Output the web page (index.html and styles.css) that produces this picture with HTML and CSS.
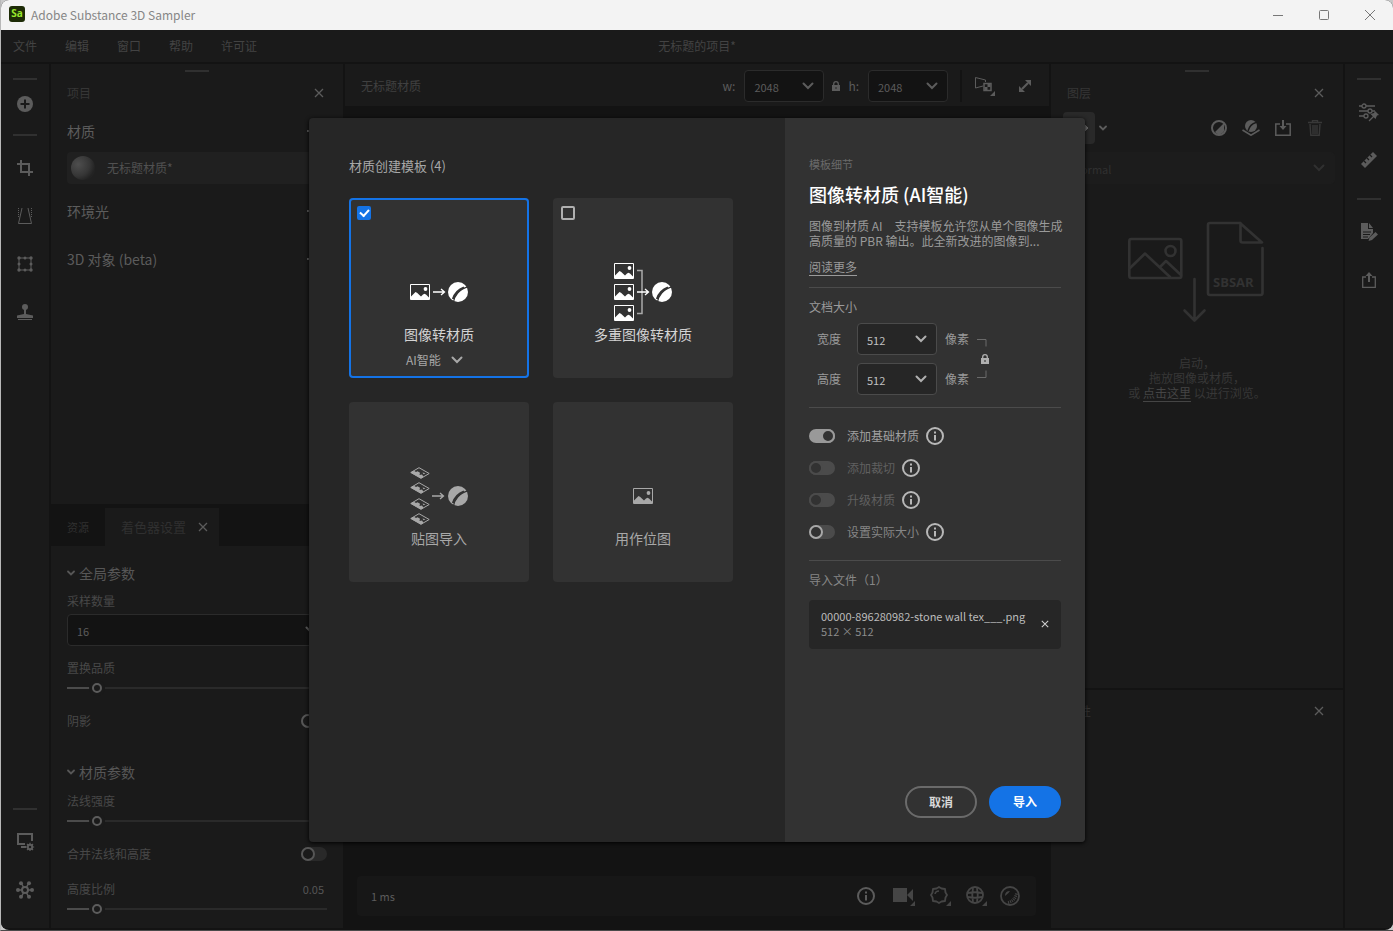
FILE: index.html
```html
<!DOCTYPE html>
<html lang="zh-CN">
<head>
<meta charset="utf-8">
<title>Adobe Substance 3D Sampler</title>
<link rel="stylesheet" href="styles.css">
</head>
<body>
<svg class="defs" aria-hidden="true">
  <symbol id="chevron" viewBox="0 0 12 8"><path d="M1.500 1.500 6 6l4.500-4.500" fill="none" stroke="currentColor" stroke-width="2" stroke-linecap="round"/></symbol>
  <symbol id="chevron-small" viewBox="0 0 8 6"><path d="M1 1.500l3 3 3-3" fill="none" stroke="currentColor" stroke-width="1.800" stroke-linecap="round"/></symbol>
  <symbol id="close" viewBox="0 0 10 10"><path d="M1 1l8 8M9 1 1 9" fill="none" stroke="currentColor" stroke-width="1.300"/></symbol>
  <symbol id="lock" viewBox="0 0 8 10"><path d="M0 4h8v6H0z" fill="currentColor"/><path d="M1.700 4.500V3a2.300 2.300 0 0 1 4.600 0v1.500" fill="none" stroke="currentColor" stroke-width="1.300"/><path class="cut" d="M3.500 6h1v2h-1z"/></symbol>
  <symbol id="info" viewBox="0 0 18 18"><circle cx="9" cy="9" r="8" fill="none" stroke="currentColor" stroke-width="2"/><path d="M8 8h2v5.500H8zM8 4.500h2v2H8z" fill="currentColor"/></symbol>
  <symbol id="image" viewBox="0 0 20 16"><path d="M.5.5h19v15H.5z" fill="none" stroke="currentColor"/><path d="M1 12.500 5.500 8l1.500.800L11 12.500l2-2 1.500-.800 1.500.800 3 3V16H1z" fill="currentColor"/><circle cx="15.500" cy="5" r="1.900" fill="currentColor"/></symbol>
  <symbol id="ball" viewBox="0 0 20 20"><circle cx="10" cy="10" r="10" fill="currentColor"/><path class="cut-line" d="M5.500 20C6.200 14 11 7 20 4.800" stroke-width="1.300"/><path class="cut-line" d="M5 17C6.500 12.500 10.500 7.500 16 5.500" stroke-width="2.300"/></symbol>
  <symbol id="arrow" viewBox="0 0 13 8"><path d="M0 4h11M8 1l3.500 3L8 7" fill="none" stroke="currentColor" stroke-width="1.300"/></symbol>
  <symbol id="tile" viewBox="0 0 20 12"><path d="M.8 5.500 9 .700 19.200 6.500 11 11.300z" fill="none" stroke="currentColor"/><path d="M.5 5.500 4 3.700l2 1.300 1.500-.700L10 5.800 9.500 8l2.500-.500 1.500 2.300-2.500 1.700z" fill="currentColor"/><path d="M12.500 5.500l3 .800-2 1z" fill="currentColor"/></symbol>
  <symbol id="dash" viewBox="0 0 12 12"><path d="M0 6h12" stroke="currentColor" stroke-width="2"/></symbol>
</svg>

<div class="window">
  <header class="titlebar">
    <span class="logo">Sa</span>
    <h1 class="app-name">Adobe Substance 3D Sampler</h1>
    <div class="window-buttons">
      <button aria-label="最小化"><svg width="10" height="10"><path d="M0 5.500h10" stroke="#777"/></svg></button>
      <button aria-label="最大化"><svg width="10" height="10"><rect x=".5" y=".5" width="9" height="9" rx="1" fill="none" stroke="#777"/></svg></button>
      <button aria-label="关闭窗口"><svg width="10" height="10"><path d="M0 0l10 10M10 0 0 10" stroke="#777"/></svg></button>
    </div>
  </header>

  <nav class="menubar">
    <div class="menus"><button>文件</button><button>编辑</button><button>窗口</button><button>帮助</button><button>许可证</button></div>
    <span>无标题的项目*</span>
    <span></span>
  </nav>

  <main class="workspace">
    <aside class="rail">
      <i class="grip"></i>
      <button class="short" aria-label="添加"><svg width="16" height="16" viewBox="0 0 16 16"><circle cx="8" cy="8" r="8" fill="currentColor"/><path d="M8 3.500v9M3.500 8h9" stroke="#1a1a1a" stroke-width="2"/></svg></button>
      <i class="grip"></i>
      <button aria-label="裁剪"><svg width="16" height="16" viewBox="0 0 16 16" fill="none" stroke="currentColor" stroke-width="2"><path d="M4 0v12h12M0 4h3M5 4h7v7M12 13v3"/></svg></button>
      <button aria-label="透视"><svg width="16" height="18" viewBox="0 0 16 18" fill="none" stroke="currentColor"><path d="M5 1 1.500 16.500h13L11 1"/><path d="M1.500 1v10M14.500 1v10" stroke-dasharray="1 1"/></svg></button>
      <button aria-label="变换"><svg width="16" height="16" viewBox="0 0 16 16"><path d="M2 2h12v12H2z" fill="none" stroke="currentColor"/><g fill="currentColor"><circle cx="2" cy="2" r="1.700"/><circle cx="8" cy="2" r="1.500"/><circle cx="14" cy="2" r="1.700"/><circle cx="2" cy="8" r="1.500"/><circle cx="14" cy="8" r="1.500"/><circle cx="2" cy="14" r="1.700"/><circle cx="8" cy="14" r="1.500"/><circle cx="14" cy="14" r="1.700"/></g></svg></button>
      <button aria-label="图章"><svg width="16" height="16" viewBox="0 0 16 16" fill="currentColor"><circle cx="8" cy="3" r="3"/><path d="M7 5h2v5l7 1.500V14H0v-2.500L7 10zM1 15h14v1H1z"/></svg></button>
      <div class="rail-end">
        <i class="grip"></i>
        <button aria-label="显示设置"><svg width="19" height="18" viewBox="0 0 19 18"><path d="M9 11H2V1h14v7" fill="none" stroke="currentColor" stroke-width="2"/><path d="M5 13h5v2H5z" fill="currentColor"/><circle cx="14" cy="14" r="2.200" fill="none" stroke="currentColor" stroke-width="2"/><path d="M14 9.800v8.400M9.800 14h8.400M11 11l6 6M17 11l-6 6" stroke="currentColor" stroke-width="1.200"/><circle cx="14" cy="14" r="1.200" fill="#1a1a1a"/></svg></button>
        <button aria-label="节点"><svg width="18" height="18" viewBox="0 0 18 18"><path d="M2 9h14M5.500 2.500l7 13M12.500 2.500l-7 13" stroke="currentColor" stroke-width="1.500"/><g fill="currentColor"><circle cx="2" cy="9" r="2"/><circle cx="16" cy="9" r="2"/><circle cx="5" cy="2.200" r="2"/><circle cx="13" cy="2.200" r="2"/><circle cx="5" cy="15.800" r="2"/><circle cx="13" cy="15.800" r="2"/></g><circle cx="9" cy="9" r="3" fill="#1a1a1a" stroke="currentColor" stroke-width="2"/></svg></button>
      </div>
    </aside>

    <div class="side left">
      <section class="panel project">
        <i class="grip"></i>
        <header class="panel-head"><h2>项目</h2><button aria-label="关闭项目"><svg width="10" height="10"><use href="#close"/></svg></button></header>
        <div class="group"><span>材质</span><button aria-label="折叠材质"><svg width="12" height="12"><use href="#dash"/></svg></button></div>
        <div class="material"><i class="sphere"></i><span>无标题材质*</span></div>
        <div class="group"><span>环境光</span><button aria-label="折叠环境光"><svg width="12" height="12"><use href="#dash"/></svg></button></div>
        <div class="group"><span>3D 对象 (beta)</span><button aria-label="折叠对象"><svg width="12" height="12"><use href="#dash"/></svg></button></div>
      </section>
      <section class="panel shader">
        <div class="tabs">
          <button class="tab small">资源</button>
          <button class="tab active">着色器设置 <svg width="10" height="10"><use href="#close"/></svg></button>
        </div>
        <div class="params">
          <h3><svg width="8" height="6"><use href="#chevron-small"/></svg>全局参数</h3>
          <label class="name" for="samples">采样数量</label>
          <div class="select wide"><select id="samples"><option>16</option></select><svg width="12" height="8"><use href="#chevron"/></svg></div>
          <label class="name" for="quality">置换品质</label>
          <input id="quality" type="range" value="10">
          <div class="switch-row"><label for="shadow">阴影</label><input id="shadow" class="toggle dim" type="checkbox"></div>
          <h3 class="second"><svg width="8" height="6"><use href="#chevron-small"/></svg>材质参数</h3>
          <label class="name" for="normal">法线强度</label>
          <input id="normal" type="range" value="10">
          <div class="switch-row"><label for="merge">合并法线和高度</label><input id="merge" class="toggle dim" type="checkbox"></div>
          <div class="name-row"><label for="ratio">高度比例</label><span class="num">0.05</span></div>
          <input id="ratio" type="range" value="10">
        </div>
      </section>
    </div>

    <section class="center">
      <header class="view-bar">
        <span class="view-name">无标题材质</span>
        <label for="view-w">w:</label>
        <div class="select"><select id="view-w"><option>2048</option></select><svg width="12" height="8"><use href="#chevron"/></svg></div>
        <svg class="view-lock" width="8" height="10"><use href="#lock"/></svg>
        <label for="view-h">h:</label>
        <div class="select"><select id="view-h"><option>2048</option></select><svg width="12" height="8"><use href="#chevron"/></svg></div>
        <i class="divider"></i>
        <button aria-label="视图模式"><svg width="20" height="20" viewBox="0 0 20 20"><path d="M8 10 .500 12V1.500L10.500 4v2" fill="none" stroke="currentColor"/><path d="M9 7.500h7v7H9z" fill="none" stroke="currentColor" stroke-width="1.500"/><path d="M12.500 8h3v3h-3zM9.500 11h3v3h-3zM20 15v5h-5z" fill="currentColor"/></svg></button>
        <button aria-label="展开"><svg width="12" height="12" viewBox="0 0 12 12"><path d="M3 9l6-6" stroke="currentColor" stroke-width="2.200"/><path d="M6 0h6v6zM0 6v6h6z" fill="currentColor"/></svg></button>
      </header>
      <footer class="status">
        <span>1 ms</span>
        <button class="bright" aria-label="信息"><svg width="18" height="18"><use href="#info"/></svg></button>
        <button class="has-menu" aria-label="相机"><svg width="22" height="20" viewBox="0 0 22 20" fill="currentColor"><path d="M0 2h14v14H0zM14 9l6-6v12zM22 15v5h-5z"/></svg></button>
        <button class="has-menu" aria-label="环境"><svg width="22" height="20" viewBox="0 0 22 20"><path d="M10 1l2.500 1.500 3.500.5.500 3.500L18 9l-1.500 2.500-.5 3.500-3.500.5L10 17l-2.500-1.500L4 15l-.500-3.500L2 9l1.500-2.500L4 3l3.500-.5z" fill="none" stroke="currentColor" stroke-width="1.800" stroke-linejoin="round"/><path d="M6 8q.5-3 4-3" fill="none" stroke="currentColor" stroke-width="1.500"/><path d="M22 15v5h-5z" fill="currentColor"/></svg></button>
        <button class="has-menu" aria-label="网格"><svg width="22" height="20" viewBox="0 0 22 20"><g fill="none" stroke="currentColor" stroke-width="1.800"><circle cx="10" cy="9" r="8"/><path d="M8 2q-1.500 7 0 14M12 2q1.500 7 0 14M3 7q7-1.500 14 0M3 11q7 1.500 14 0"/></g><path d="M22 15v5h-5z" fill="currentColor"/></svg></button>
        <button aria-label="着色"><svg width="20" height="20" viewBox="0 0 20 20"><circle cx="10" cy="10" r="9" fill="none" stroke="currentColor" stroke-width="1.800"/><path d="M5 10q0-5 5-5l-1.500 2z" fill="currentColor"/><path d="M16.500 7.500Q15 15 8 16.500" fill="none" stroke="currentColor" stroke-width="3" stroke-dasharray="1 1"/></svg></button>
      </footer>
    </section>

    <div class="side right">
      <section class="panel layers">
        <i class="grip"></i>
        <header class="panel-head"><h2>图层</h2><button aria-label="关闭图层"><svg width="10" height="10"><use href="#close"/></svg></button></header>
        <div class="tools">
          <button class="brush" aria-label="图层类型"><svg width="20" height="8" viewBox="0 0 20 8"><path d="M0 4h16M15 0l4 4-4 4z" fill="currentColor" stroke="currentColor"/></svg></button>
          <button class="more" aria-label="更多"><svg width="8" height="6"><use href="#chevron-small"/></svg></button>
          <button aria-label="滤镜"><svg width="16" height="16" viewBox="0 0 16 16"><circle cx="8" cy="8" r="7" fill="none" stroke="currentColor" stroke-width="2"/><path d="M13 3v5a5 5 0 0 1-9 4z" fill="currentColor"/></svg></button>
          <button aria-label="材质图层"><svg width="18" height="16" viewBox="0 0 18 16"><circle cx="9" cy="6" r="6" fill="currentColor"/><path d="M6 11Q8 4 14 2.500" fill="none" stroke="#1a1a1a" stroke-width="1.500"/><path d="M.5 10 9 15.200l8.500-5.200" fill="none" stroke="currentColor" stroke-width="1.600"/></svg></button>
          <button aria-label="导入图层"><svg width="16" height="16" viewBox="0 0 16 16"><path d="M5 4H.800v11.200h14.400V4H11" fill="none" stroke="currentColor" stroke-width="1.500"/><path d="M7 0h2v6h2.500L8 10 4.500 6H7z" fill="currentColor"/></svg></button>
          <button class="off" aria-label="删除"><svg width="14" height="16" viewBox="0 0 14 16"><path d="M0 2.500h14M4.500 2V.500h5V2M2 4l.800 11.300h8.400L12 4M5 5v9M7 5v9M9 5v9" fill="none" stroke="currentColor" stroke-width="1.400"/></svg></button>
        </div>
        <div class="select blend"><select aria-label="混合模式" disabled><option>Normal</option></select><svg width="12" height="8"><use href="#chevron"/></svg></div>
        <svg class="drop-art" width="136" height="102" viewBox="0 0 136 102" fill="none" stroke="#323232" stroke-width="2.600" stroke-linejoin="round" stroke-linecap="round"><rect x="1.300" y="18" width="52" height="39" rx="2"/><circle cx="42.500" cy="30" r="5"/><path d="M2 47 17 32.500 42 56M32 46l6-6 15 14"/><path d="M134.500 27v45a2 2 0 0 1-2 2H82a2 2 0 0 1-2-2V4a2 2 0 0 1 2-2h30l22 19.500h-19.500a2 2 0 0 1-2-2V2"/><path d="M66.500 58v41M56.500 89.500l10 10 10-10"/><text x="85" y="66" fill="#323232" stroke="none" class="art-label">SBSAR</text></svg>
        <p class="hint">启动，<br>拖放图像或材质，<br>或 <a href="#browse">点击这里</a> 以进行浏览。</p>
      </section>
      <section class="panel props">
        <header class="panel-head"><h2>属性</h2><button aria-label="关闭属性"><svg width="10" height="10"><use href="#close"/></svg></button></header>
      </section>
    </div>

    <aside class="rail">
      <i class="grip"></i>
      <button aria-label="参数"><svg width="20" height="19" viewBox="0 0 20 19"><g fill="none" stroke="currentColor" stroke-width="1.300"><path d="M0 3h3M7 3h9M0 8h9M13 8h3M0 13h5"/><circle cx="5" cy="3" r="2"/><circle cx="11" cy="8" r="2"/><circle cx="7" cy="13" r="2"/><path d="M10 18l5-5"/></g><path d="M16 8l4 4-2 .500-1.500 3.500-5-5L15 10z" fill="currentColor"/></svg></button>
      <button aria-label="测量"><svg width="16" height="16" viewBox="0 0 16 16"><path d="M0 12 12 0l4 4L4 16z" fill="currentColor"/><path d="M3 9l2 2M6 6l2 2M9 3l2 2" stroke="#1a1a1a" stroke-width="1.200"/></svg></button>
      <i class="grip"></i>
      <button aria-label="元数据"><svg width="17" height="18" viewBox="0 0 17 18"><path d="M0 0h7v6h5v4l-5 6H0zM8 0l4 5H8z" fill="currentColor"/><path d="M2 9h8M2 11.500h7M2 14h5" stroke="#1a1a1a"/><path d="M7.500 18l1-3.500 6-5.500 2.500 2.500-6 5.500z" fill="currentColor"/></svg></button>
      <button aria-label="分享"><svg width="14" height="16" viewBox="0 0 14 16"><path d="M4 5H.700v10.300h12.600V5H10" fill="none" stroke="currentColor" stroke-width="1.300"/><path d="M6 10V4H3.500L7 0l3.500 4H8v6z" fill="currentColor"/></svg></button>
    </aside>
  </main>

  <div class="overlay">
    <div class="dialog" role="dialog" aria-label="材质创建模板">
      <section class="templates">
        <h2>材质创建模板 (4)</h2>
        <div class="cards">
          <article class="card selected">
            <input type="checkbox" aria-label="图像转材质" checked>
            <svg class="art" width="60" height="60" viewBox="0 0 60 60"><use href="#image" x="1" y="22" width="20" height="16"/><use href="#arrow" x="24" y="26" width="13" height="8"/><use href="#ball" x="39" y="20" width="20" height="20"/></svg>
            <h3>图像转材质</h3>
            <button class="variant">AI智能 <svg width="12" height="8"><use href="#chevron"/></svg></button>
          </article>
          <article class="card">
            <input type="checkbox" aria-label="多重图像转材质">
            <svg class="art" width="60" height="60" viewBox="0 0 60 60"><use href="#image" x="1" y="1" width="20" height="16"/><use href="#image" x="1" y="22" width="20" height="16"/><use href="#image" x="1" y="43" width="20" height="16"/><path d="M24 8.500h5v43h-5" fill="none" stroke="#aaa" stroke-width="1.500"/><use href="#arrow" x="24" y="26" width="13" height="8"/><use href="#ball" x="39" y="20" width="20" height="20"/></svg>
            <h3>多重图像转材质</h3>
          </article>
          <article class="card muted">
            <svg class="art" width="60" height="60" viewBox="0 0 60 60"><use href="#tile" x="1" y="1" width="20" height="12"/><use href="#tile" x="1" y="16" width="20" height="12"/><use href="#tile" x="1" y="32" width="20" height="12"/><use href="#tile" x="1" y="47" width="20" height="12"/><use href="#arrow" x="23" y="26" width="13" height="8"/><use href="#ball" x="39" y="20" width="20" height="20"/></svg>
            <h3>贴图导入</h3>
          </article>
          <article class="card muted">
            <svg class="art" width="60" height="60" viewBox="0 0 60 60"><use href="#image" x="20" y="22" width="20" height="16"/></svg>
            <h3>用作位图</h3>
          </article>
        </div>
      </section>
      <section class="details">
        <p class="eyebrow">模板细节</p>
        <h2>图像转材质 (AI智能)</h2>
        <p class="desc">图像到材质 AI　支持模板允许您从单个图像生成<br>高质量的 PBR 输出。此全新改进的图像到...</p>
        <a class="read-more" href="#more">阅读更多</a>
        <div class="block">
          <h3>文档大小</h3>
          <div class="size">
            <label for="doc-w">宽度</label>
            <div class="select"><select id="doc-w"><option>512</option></select><svg width="12" height="8"><use href="#chevron"/></svg></div>
            <span>像素</span>
            <svg class="link" width="16" height="48" viewBox="0 0 16 48"><path d="M1 4.500h9v7M1 42.500h9v-7" fill="none" stroke="#6a6a6a"/><use href="#lock" x="5" y="19" width="8" height="10"/></svg>
            <label for="doc-h">高度</label>
            <div class="select"><select id="doc-h"><option>512</option></select><svg width="12" height="8"><use href="#chevron"/></svg></div>
            <span>像素</span>
          </div>
        </div>
        <div class="block options">
          <div class="option on"><input id="base" class="toggle" type="checkbox" checked><label for="base">添加基础材质</label><svg width="18" height="18"><use href="#info"/></svg></div>
          <div class="option off"><input id="crop" class="toggle" type="checkbox" disabled><label for="crop">添加裁切</label><svg width="18" height="18"><use href="#info"/></svg></div>
          <div class="option off"><input id="upscale" class="toggle" type="checkbox" disabled><label for="upscale">升级材质</label><svg width="18" height="18"><use href="#info"/></svg></div>
          <div class="option"><input id="physical" class="toggle" type="checkbox"><label for="physical">设置实际大小</label><svg width="18" height="18"><use href="#info"/></svg></div>
        </div>
        <div class="block files">
          <h3>导入文件（1）</h3>
          <div class="file">
            <div><p class="file-name">00000-896280982-stone wall tex___.png</p><p class="file-size">512 × 512</p></div>
            <button aria-label="移除文件"><svg width="8" height="8"><use href="#close"/></svg></button>
          </div>
        </div>
        <div class="actions"><button class="cancel">取消</button><button class="import">导入</button></div>
      </section>
    </div>
  </div>
</div>
</body>
</html>
```
FILE: styles.css
```css
*, *::before { box-sizing: border-box; }
html, body { height: 100%; }
body {
  margin: 0;
  border-left: 1px solid #b8b8b8;
  border-bottom: 1px solid #4a4a4a;
  background: #c8c8c8;
  color: #4e4e4e;
  font: 12px/16px "Noto Sans CJK SC", sans-serif;
  overflow: hidden;
}
h1, h2, h3, p { margin: 0; font-weight: 400; font-size: inherit; }
button, select, input { font: inherit; color: inherit; margin: 0; }
button { border: 0; padding: 0; background: none; display: flex; align-items: center; justify-content: center; }
svg { display: block; flex: none; }
i { display: block; }
.defs { position: absolute; width: 0; height: 0; }
.cut { fill: #262626; }
.cut-line { fill: none; stroke: #323232; }

.window {
  position: relative;
  display: flex;
  flex-direction: column;
  height: 100%;
  border-radius: 8px;
  overflow: hidden;
  background: #131313;
}

/* Title bar */
.titlebar { display: flex; align-items: center; height: 30px; flex: none; padding-left: 8px; background: #f3f3f3; }
.logo {
  width: 16px; height: 16px; margin: -2px 6px 0 0;
  border-radius: 3px; background: #1d2b06; color: #97e62c;
  font: bold 10px/15px "Open Sans", sans-serif; text-align: center;
}
.app-name { flex: 1; color: #868686; font-size: 12px; }
.window-buttons { display: flex; }
.window-buttons button { width: 46px; height: 28px; }

.menubar {
  display: grid; grid-template-columns: 1fr auto 1fr; align-items: center;
  height: 32px; flex: none; margin-bottom: 2px; padding: 0 12px;
  background: #1a1a1a; color: #434343;
}
.menus { display: flex; gap: 28px; }

.workspace { flex: 1; min-height: 0; display: flex; gap: 2px; padding-bottom: 2px; }

/* Icon rails */
.rail { width: 48px; flex: none; display: flex; flex-direction: column; align-items: center; background: #1a1a1a; color: #5c5c5c; }
.rail button { width: 48px; height: 48px; }
.rail .short { height: 32px; }
.grip { width: 24px; height: 2px; flex: none; background: #303030; }
.rail .grip { margin: 14px auto 8px; }
.rail-end { margin-top: auto; padding-bottom: 14px; }

/* Side panels */
.side { width: 292px; flex: none; display: flex; flex-direction: column; gap: 2px; }
.panel { background: #1a1a1a; }
.panel > .grip { margin: 6px auto 0; }
.panel-head { display: flex; align-items: center; justify-content: space-between; height: 40px; padding: 2px 8px 0 16px; color: #363636; }
.panel-head button { width: 32px; height: 32px; color: #5c5c5c; }
.project { flex: 1; min-height: 0; }
.group { display: flex; align-items: center; justify-content: space-between; height: 40px; padding: 0 24px 2px 16px; margin-bottom: 8px; font-size: 14px; color: #5c5c5c; }
.group:has(+ .material) { margin-bottom: 0; }
.material { display: flex; align-items: center; gap: 12px; height: 32px; margin: 0 16px 8px; padding-left: 4px; border-radius: 4px; background: #202020; color: #515151; }
.sphere { width: 24px; height: 24px; border-radius: 50%; background: radial-gradient(circle at 30% 35%, #4e4e4e, #363636 50%, #222 75%, #3c3c3c); }

.shader { height: 422px; flex: none; }
.tabs { display: flex; height: 40px; padding-top: 2px; background: #131313; }
.tab { gap: 12px; padding: 0 16px; color: #303030; font-size: 13px; }
.tab.small { font-size: 11px; }
.tab.active { padding-right: 11px; background: #1a1a1a; }
.tab svg { color: #5c5c5c; }
.params { padding: 17px 16px 0; color: #484848; }
.params h3 { display: flex; align-items: center; gap: 4px; height: 20px; padding-bottom: 1px; font-size: 14px; color: #565656; }
.params h3.second { margin-top: 31px; }
.name { display: block; height: 20px; margin-top: 8px; line-height: 20px; }
.second + .name { margin-top: 9px; }
.select + .name { margin-top: 12px; }
.name-row { display: flex; justify-content: space-between; height: 20px; line-height: 20px; margin-top: 15px; }
.num { font-size: 11px; color: #565656; padding-right: 3px; }

.params input[type="range"] {
  display: block; appearance: none; width: 100%; height: 20px; background: none;
}
.params input[type="range"]::-webkit-slider-runnable-track {
  height: 2px; background: linear-gradient(to right, #4b4b4b 30px, #2a2a2a 30px);
}
.params input[type="range"]::-webkit-slider-thumb {
  appearance: none; box-sizing: border-box; width: 10px; height: 10px; margin-top: -4px; border-radius: 50%;
  border: 2px solid #5c5c5c; background: #1a1a1a; box-shadow: 0 0 0 3px #1a1a1a;
}
.switch-row { display: flex; align-items: center; justify-content: space-between; height: 20px; margin-top: 13px; }

.toggle { appearance: none; width: 26px; height: 14px; flex: none; border-radius: 7px; background: #4b4b4b; }
.toggle::before { content: ""; display: block; width: 14px; height: 14px; border: 2px solid #a8a8a8; border-radius: 50%; background: #323232; }
.toggle:checked { background: #999; }
.toggle:checked::before { margin-left: auto; border-color: #999; }
.toggle:disabled::before { border-color: #4b4b4b; }
.toggle.dim { background: #292929; }
.toggle.dim::before { border-color: #565656; background: #1a1a1a; }

.select { display: grid; align-items: center; width: 80px; }
.select > * { grid-area: 1 / 1; }
.select select {
  appearance: none; width: 100%; height: 32px; padding: 2px 9px 0;
  border: 1px solid #2b2b2b; border-radius: 4px; background: #131313; color: #5c5c5c;
  font-size: 11px; opacity: 1;
}
.select svg { justify-self: end; margin-right: 10px; pointer-events: none; color: #5c5c5c; }
.select.wide { width: 100%; margin-top: 3px; }

/* Viewport */
.center { flex: 1; min-width: 0; display: flex; flex-direction: column; justify-content: space-between; }
.view-bar { display: flex; align-items: center; height: 42px; padding: 2px 8px 0 16px; background: #1a1a1a; color: #5c5c5c; }
.view-name { flex: 1; color: #404040; }
.view-bar label { margin-right: 9px; }
.view-lock { margin: 0 8px; }
.divider { width: 2px; height: 32px; margin: 0 7px 0 12px; background: #131313; }
.view-bar button { width: 32px; height: 32px; }
.view-bar button + button { margin-left: 8px; }
.status { display: flex; align-items: center; gap: 4px; height: 40px; margin: 0 13px 12px 12px; padding: 0 10px 0 14px; border-radius: 4px; background: #171717; color: #454545; }
.status span { flex: 1; color: #5c5c5c; font-size: 11px; }
.status button { width: 32px; height: 32px; }
.status .has-menu { padding-left: 4px; }
.status .bright { color: #5c5c5c; }

/* Layers */
.layers { flex: 1; min-height: 0; }
.tools { display: flex; align-items: center; padding: 0 12px; color: #5c5c5c; }
.tools button { width: 32px; height: 32px; }
.tools .brush { border-radius: 4px; background: #292929; color: #6c6c6c; }
.tools .more { width: 16px; margin-right: auto; }
.tools .off { color: #383838; }
.select.blend { width: auto; margin: 8px 8px 0 12px; }
.blend select { border-color: #1c1c1c; background: #1c1c1c; color: #303030; }
.blend svg { color: #303030; }
.drop-art { margin: 37px 0 0 77px; }
.art-label { font: bold 13px "Open Sans", sans-serif; }
.hint { margin-top: 32px; text-align: center; line-height: 15px; color: #373737; }
.hint a { color: #454545; text-underline-offset: 3px; }
.props { height: 238px; flex: none; }

/* Dialog */
.overlay { position: absolute; inset: 30px 0 0; display: grid; place-items: center; }
.dialog {
  display: flex; width: min(776px, 100% - 48px); height: calc(100% - 176px);
  border-radius: 4px; overflow: hidden; background: #262626; box-shadow: 0 1px 4px #000;
}
.templates { flex: 1; padding: 38px 0 0 40px; }
.templates h2 { height: 20px; line-height: 20px; font-size: 13px; color: #a8a8a8; }
.cards { display: grid; grid-template-columns: 180px 180px; gap: 24px; margin-top: 22px; }
.card {
  display: grid; grid-template-rows: 56px 60px 26px 24px; justify-items: center; align-items: center;
  height: 180px; padding: 8px; border-radius: 4px; background: #323232; color: #fff;
}
.card.selected { box-shadow: inset 0 0 0 2px #1473e6; }
.card .art { grid-row: 2; }
.card h3 { grid-row: 3; padding-bottom: 2px; font-size: 14px; line-height: 20px; color: #d4d4d4; }
.card.muted, .card.muted h3 { color: #a8a8a8; }
.card input {
  appearance: none; width: 14px; height: 14px; place-self: start;
  border: 2px solid #b0b0b0; border-radius: 2px;
}
.card input:checked { border-color: #1473e6; background: #1473e6; }
.card input:checked::before {
  content: ""; display: block; width: 9px; height: 6px; margin: 1px;
  border: solid #fff; border-width: 0 0 2px 2px; transform: rotate(-48deg);
}
.variant { grid-row: 4; gap: 10px; justify-self: start; margin-left: 49px; color: #a8a8a8; }

.details { width: 300px; flex: none; display: flex; flex-direction: column; padding: 38px 24px 24px; background: #323232; color: #9a9a9a; }
.eyebrow { font-size: 11px; color: #6a6a6a; }
.details h2 { margin-top: 10px; font-size: 18px; line-height: 24px; font-weight: 500; color: #fff; }
.desc { margin-top: 12px; line-height: 15px; white-space: nowrap; }
.read-more { align-self: start; margin: 11px 0 12px; color: #9a9a9a; text-underline-offset: 3px; }
.block { border-top: 1px solid #4b4b4b; }
.block h3 { height: 20px; line-height: 20px; }
.block:not(.options) { padding-top: 9px; }
.size { display: grid; grid-template-columns: 40px 80px 32px 16px; grid-template-rows: 32px 32px; row-gap: 8px; align-items: center; padding: 6px 0 12px 8px; }
.size .select select { border-color: #4b4b4b; background: #262626; color: #c0c0c0; }
.size .select svg { color: #b0b0b0; }
.size span { padding-left: 8px; }
.size .link { grid-column: 4; grid-row: 1 / 3; margin-left: 7px; color: #b0b0b0; }
.options { padding: 12px 0; }
.option { display: flex; align-items: center; height: 32px; }
.option label { margin: 0 7px 0 12px; color: #868686; }
.option.on label { color: #a0a0a0; }
.option.off label { color: #606060; }
.option svg { color: #b8b8b8; }
.files h3 { color: #868686; }
.file { display: flex; align-items: center; justify-content: space-between; margin-top: 10px; padding: 9px 12px 10px; border-radius: 4px; background: #262626; line-height: 15px; }
.file-name { color: #bcbcbc; font-size: 11px; }
.file-size { color: #8c8c8c; font-size: 11px; }
.file button { color: #d0d0d0; }
.actions { display: flex; justify-content: flex-end; gap: 12px; margin-top: auto; }
.actions button { width: 72px; height: 32px; border-radius: 16px; font-weight: 700; color: #fff; }
.actions .cancel { border: 2px solid #6a6a6a; color: #d8d8d8; }
.actions .import { background: #1473e6; }
```
